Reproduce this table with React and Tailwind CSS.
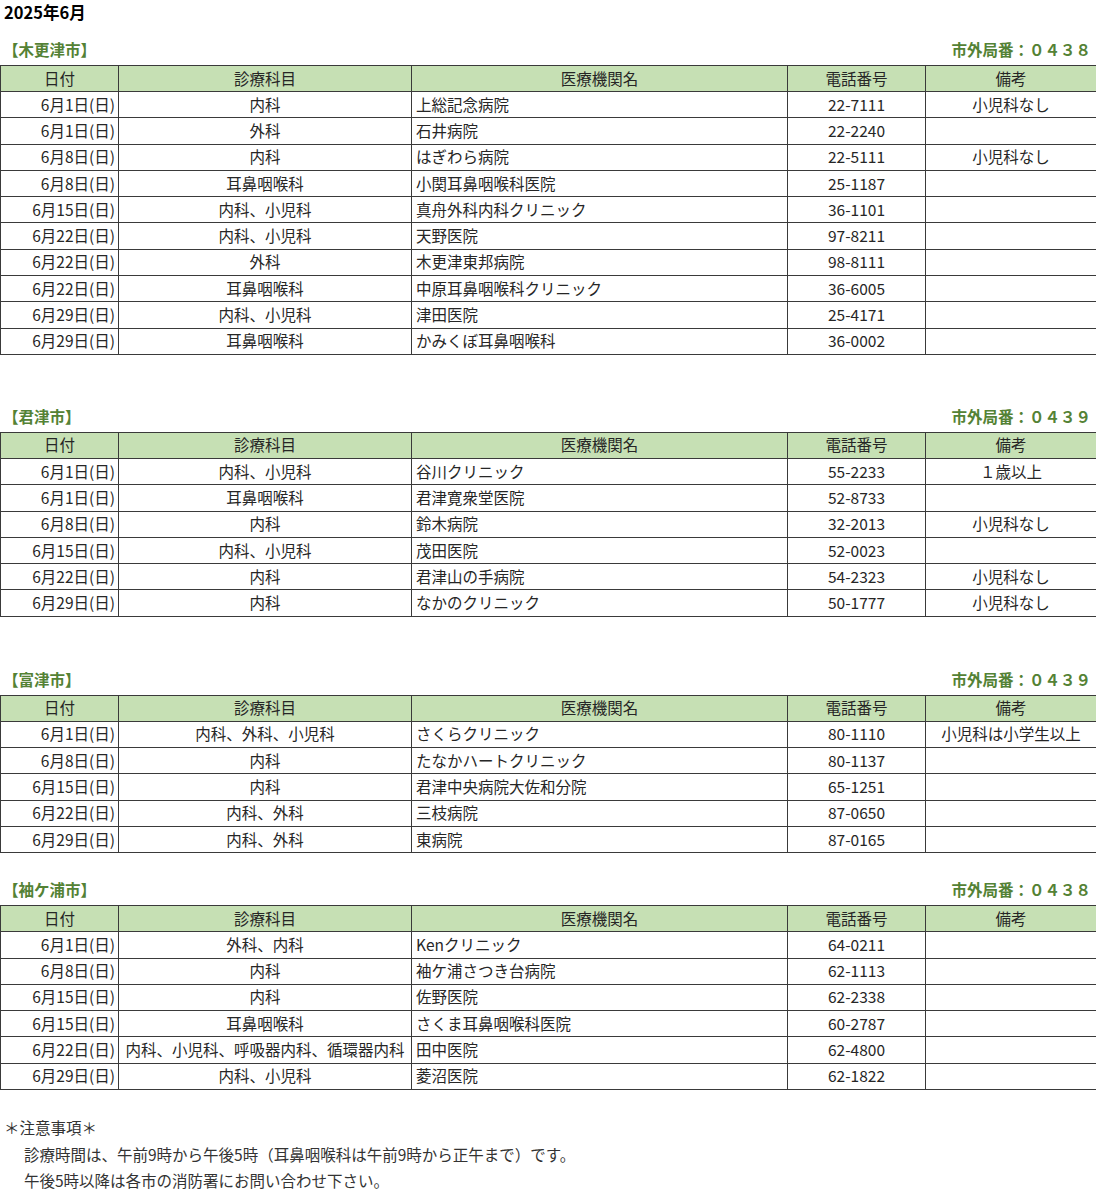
import React from "react";

const sections = [
  {
    name: "【木更津市】",
    code: "市外局番：０４３８",
    gapTop: "mt-[13px]",
    rows: [
      ["6月1日(日)", "内科", "上総記念病院", "22-7111", "小児科なし"],
      ["6月1日(日)", "外科", "石井病院", "22-2240", ""],
      ["6月8日(日)", "内科", "はぎわら病院", "22-5111", "小児科なし"],
      ["6月8日(日)", "耳鼻咽喉科", "小関耳鼻咽喉科医院", "25-1187", ""],
      ["6月15日(日)", "内科、小児科", "真舟外科内科クリニック", "36-1101", ""],
      ["6月22日(日)", "内科、小児科", "天野医院", "97-8211", ""],
      ["6月22日(日)", "外科", "木更津東邦病院", "98-8111", ""],
      ["6月22日(日)", "耳鼻咽喉科", "中原耳鼻咽喉科クリニック", "36-6005", ""],
      ["6月29日(日)", "内科、小児科", "津田医院", "25-4171", ""],
      ["6月29日(日)", "耳鼻咽喉科", "かみくぼ耳鼻咽喉科", "36-0002", ""],
    ],
  },
  {
    name: "【君津市】",
    code: "市外局番：０４３９",
    gapTop: "mt-[49px]",
    rows: [
      ["6月1日(日)", "内科、小児科", "谷川クリニック", "55-2233", "１歳以上"],
      ["6月1日(日)", "耳鼻咽喉科", "君津寛衆堂医院", "52-8733", ""],
      ["6月8日(日)", "内科", "鈴木病院", "32-2013", "小児科なし"],
      ["6月15日(日)", "内科、小児科", "茂田医院", "52-0023", ""],
      ["6月22日(日)", "内科", "君津山の手病院", "54-2323", "小児科なし"],
      ["6月29日(日)", "内科", "なかのクリニック", "50-1777", "小児科なし"],
    ],
  },
  {
    name: "【富津市】",
    code: "市外局番：０４３９",
    gapTop: "mt-[50px]",
    rows: [
      ["6月1日(日)", "内科、外科、小児科", "さくらクリニック", "80-1110", "小児科は小学生以上"],
      ["6月8日(日)", "内科", "たなかハートクリニック", "80-1137", ""],
      ["6月15日(日)", "内科", "君津中央病院大佐和分院", "65-1251", ""],
      ["6月22日(日)", "内科、外科", "三枝病院", "87-0650", ""],
      ["6月29日(日)", "内科、外科", "東病院", "87-0165", ""],
    ],
  },
  {
    name: "【袖ケ浦市】",
    code: "市外局番：０４３８",
    gapTop: "mt-[24px]",
    rows: [
      ["6月1日(日)", "外科、内科", "Kenクリニック", "64-0211", ""],
      ["6月8日(日)", "内科", "袖ケ浦さつき台病院", "62-1113", ""],
      ["6月15日(日)", "内科", "佐野医院", "62-2338", ""],
      ["6月15日(日)", "耳鼻咽喉科", "さくま耳鼻咽喉科医院", "60-2787", ""],
      ["6月22日(日)", "内科、小児科、呼吸器内科、循環器内科", "田中医院", "62-4800", ""],
      ["6月29日(日)", "内科、小児科", "菱沼医院", "62-1822", ""],
    ],
  },
];

const headers = ["日付", "診療科目", "医療機関名", "電話番号", "備考"];

const cell = "border border-[#3a3a3a] border-x-[1.5px] pt-0 pb-[2px] leading-[22px] whitespace-nowrap";

function Section({ s }) {
  return (
    <div className={s.gapTop}>
      <div className="h-[28px] flex items-start justify-between text-[15.5px] font-bold text-[#548235] leading-[24px]">
        <span className="pl-[3px]">{s.name}</span>
        <span className="pr-[5px]">{s.code}</span>
      </div>
      <table className="w-[1096px] table-fixed border-collapse text-[15.5px] text-[#262626]">
        <colgroup>
          <col className="w-[118px]" />
          <col className="w-[293px]" />
          <col className="w-[376px]" />
          <col className="w-[138px]" />
          <col className="w-[171px]" />
        </colgroup>
        <thead>
          <tr className="h-[26px] bg-[#c6e0b4]">
            {headers.map((h) => (
              <th key={h} className={`${cell} px-0 font-normal text-center`}>
                {h}
              </th>
            ))}
          </tr>
        </thead>
        <tbody>
          {s.rows.map((r, i) => (
            <tr key={i} className="h-[26.3px]">
              <td className={`${cell} text-right pl-0 pr-[3px]`}>{r[0]}</td>
              <td className={`${cell} px-0 text-center`}>{r[1]}</td>
              <td className={`${cell} text-left pl-[4px] pr-0`}>{r[2]}</td>
              <td className={`${cell} px-0 text-center`}>{r[3]}</td>
              <td className={`${cell} px-0 text-center`}>{r[4]}</td>
            </tr>
          ))}
        </tbody>
      </table>
    </div>
  );
}

export default function App() {
  return (
    <div
      className="w-[1096px] bg-white text-[#262626]"
      style={{ fontFamily: '"Noto Sans CJK JP", "Noto Sans", sans-serif' }}
    >
      <div className="h-[24px] leading-[24px] pl-[4px] text-[16.5px] font-bold text-black">2025年6月</div>
      {sections.map((s) => (
        <Section key={s.name} s={s} />
      ))}
      <div className="mt-[24px] text-[15.5px] leading-[26.5px] text-[#333]">
        <div className="pl-[4px]">＊注意事項＊</div>
        <div className="pl-[24px]">診療時間は、午前9時から午後5時（耳鼻咽喉科は午前9時から正午まで）です。</div>
        <div className="pl-[24px]">午後5時以降は各市の消防署にお問い合わせ下さい。</div>
      </div>
    </div>
  );
}
